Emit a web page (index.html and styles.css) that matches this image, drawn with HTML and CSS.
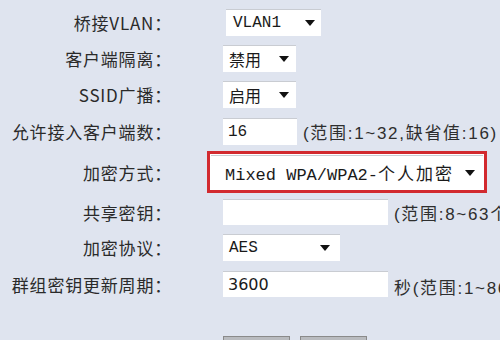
FILE: index.html
```html
<!DOCTYPE html>
<html lang="zh-CN">
<head>
<meta charset="utf-8">
<title>无线安全设置</title>
<link rel="stylesheet" href="styles.css">
</head>
<body>
<div class="form">
  <div class="row r1">
    <span class="label">桥接VLAN：</span>
    <div class="ctl">
      <div class="sel sel-vlan mono"><span>VLAN1</span><i class="arrow"></i></div>
    </div>
  </div>
  <div class="row r2">
    <span class="label">客户端隔离：</span>
    <div class="ctl">
      <div class="sel sel-sm"><span>禁用</span><i class="arrow"></i></div>
    </div>
  </div>
  <div class="row r3">
    <span class="label">SSID广播：</span>
    <div class="ctl">
      <div class="sel sel-sm"><span>启用</span><i class="arrow"></i></div>
    </div>
  </div>
  <div class="row r4">
    <span class="label">允许接入客户端数：</span>
    <div class="ctl">
      <div class="inp inp-sm mono">16</div>
      <span class="hint">(范围:1~32,缺省值:16)</span>
    </div>
  </div>
  <div class="row r5">
    <span class="label">加密方式：</span>
    <div class="ctl">
      <div class="hl">
        <div class="sel sel-wide"><span><span class="mono">Mixed WPA/WPA2-</span><span class="cjk">个人加密</span></span><i class="arrow"></i></div>
      </div>
    </div>
  </div>
  <div class="row r6">
    <span class="label">共享密钥：</span>
    <div class="ctl">
      <div class="inp inp-lg"></div>
      <span class="hint">(范围:8~63个字符)</span>
    </div>
  </div>
  <div class="row r7">
    <span class="label">加密协议：</span>
    <div class="ctl">
      <div class="sel sel-md mono"><span>AES</span><i class="arrow"></i></div>
    </div>
  </div>
  <div class="row r8">
    <span class="label">群组密钥更新周期：</span>
    <div class="ctl">
      <div class="inp inp-lg sans">3600</div>
      <span class="hint hint-low">秒(范围:1~86400)</span>
    </div>
  </div>
  <div class="btns">
    <button class="btn">保存</button>
    <button class="btn">取消</button>
  </div>
</div>
</body>
</html>
```
FILE: styles.css
```css
html, body {
  margin: 0;
  padding: 0;
}
body {
  width: 500px;
  height: 340px;
  overflow: hidden;
  background: #dfe4ef;
  color: #2e2e2e;
  font-family: "Noto Sans CJK SC", "Liberation Sans", sans-serif;
}
.form {
  padding-top: 4px;
}
.row {
  display: flex;
  align-items: center;
}
.r1 { height: 36px; }
.r2 { height: 37px; }
.r3 { height: 35px; }
.r4 { height: 38px; }
.r5 { height: 44px; }
.r6 { height: 36px; }
.r7 { height: 35px; }
.r8 { height: 38px; }

.label {
  flex: none;
  width: 172px;
  display: flex;
  justify-content: flex-end;
  white-space: nowrap;
  font-size: 17px;
  letter-spacing: 0.8px;
  color: #2a2a2a;
}
.ctl {
  margin-left: 51px;
  display: flex;
  align-items: center;
  gap: 6px;
  white-space: nowrap;
}
.mono {
  font-family: "Liberation Mono", "Noto Sans CJK SC", monospace;
}
.sans {
  font-family: "DejaVu Sans", sans-serif;
}
.sel, .inp {
  box-sizing: border-box;
  background: #fff;
  border-top: 1px solid #c9ccd2;
  height: 27px;
  display: flex;
  align-items: center;
  font-size: 16px;
  color: #1a1a1a;
}
.sel {
  justify-content: space-between;
  padding: 0 6px 0 6px;
}
.arrow {
  flex: none;
  width: 0;
  height: 0;
  border-left: 5px solid transparent;
  border-right: 5px solid transparent;
  border-top: 6px solid #111;
}
.sel-vlan { width: 95px; margin-left: 3px; padding-left: 7px; }
.sel-sm { width: 73px; padding-right: 7px; }
.sel-md { width: 117px; padding-right: 10px; }
.sel-wide {
  width: 272px;
  height: 34px;
  padding-left: 14px;
  padding-right: 8px;
  font-size: 17px;
}
.sel-wide .cjk {
  letter-spacing: 2px;
}
.inp { padding-left: 5px; }
.inp-sm { width: 74px; }
.inp-lg { width: 165px; height: 26px; }

.hl {
  margin-left: -16px;
  border: 3px solid #d22a2f;
  padding: 1px;
  background: #fff;
}
.hint {
  font-size: 17px;
  letter-spacing: 1.7px;
  color: #2e2e2e;
  font-family: "Liberation Sans", "Noto Sans CJK SC", sans-serif;
}
.hint-low {
  margin-top: 5px;
}
.btns {
  margin-top: 33px;
  margin-left: 223px;
  display: flex;
  gap: 10px;
}
.btn {
  width: 67px;
  height: 24px;
  border: 1px solid #8a8a8a;
  background: #b9bbbf;
  font-size: 13px;
}
```
